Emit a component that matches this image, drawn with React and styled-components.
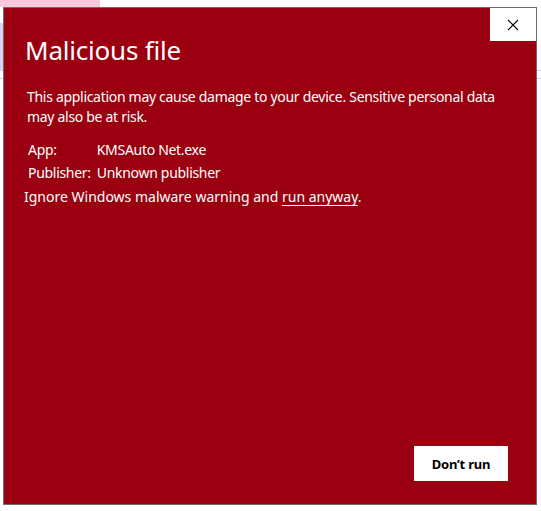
import React from 'react';
import styled, {createGlobalStyle} from "styled-components";

const GlobalStyle = createGlobalStyle`
  html, body {
    margin: 0;
    padding: 0;
    background: #ffffff;
  }
  #root {
    width: 541px;
    height: 511px;
  }
`

const Screen = styled.div`
  position: relative;
  width: 541px;
  height: 511px;
  overflow: hidden;
  background: #ffffff;
  font-family: "Noto Sans", "Open Sans", sans-serif;
`

// the app window that peeks out behind the dialog
const Backdrop = styled.div`
  display: flex;
  flex-direction: column;
  height: 100%;
`

const TabStrip = styled.div`
  width: 100px;
  height: 7px;
  background: #f8c8dc;
`

const SideRow = styled.div`
  display: flex;
  justify-content: space-between;
  height: ${p => p.h}px;
  border-bottom: ${p => p.line ? '1px solid #d6d6d6' : 'none'};
`

const LeftChip = styled.div`
  width: 3px;
  background: ${p => p.color || 'transparent'};
`

const Dialog = styled.div`
  position: absolute;
  left: 3px;
  top: 7px;
  width: 532px;
  height: 496px;
  background: #9a000f;
  border: 1px solid #6e6e6e;
  color: #ffffff;
  display: flex;
  flex-direction: column;
  letter-spacing: -0.3px;
`

const CloseButton = styled.button`
  position: absolute;
  top: 0;
  right: 0;
  width: 46px;
  height: 33px;
  border: none;
  background: #ffffff;
  display: flex;
  align-items: center;
  justify-content: center;
  padding: 0;
  cursor: pointer;
`

const Title = styled.h1`
  margin: 24px 0 0 21px;
  font-size: 26px;
  font-weight: 400;
  line-height: 36px;
  letter-spacing: -0.2px;
`

const Message = styled.p`
  margin: 19px 20px 0 23px;
  font-size: 14px;
  line-height: 20px;
`

const Details = styled.div`
  display: grid;
  grid-template-columns: auto 1fr;
  column-gap: 6px;
  row-gap: 3px;
  margin: 13px 0 0 24px;
  font-size: 14px;
  line-height: 20px;
`

const Ignore = styled.div`
  margin: 4px 0 0 20px;
  font-size: 14px;
  line-height: 20px;
  letter-spacing: 0;
`

const RunLink = styled.a`
  color: #ffffff;
  text-decoration: underline;
  text-underline-offset: 3px;
  cursor: pointer;
`

const Footer = styled.div`
  margin-top: auto;
  display: flex;
  justify-content: flex-end;
  padding: 0 28px 23px 0;
`

const DontRun = styled.button`
  width: 94px;
  height: 35px;
  border: none;
  background: #ffffff;
  color: #000000;
  font-family: "Noto Sans", "Open Sans", sans-serif;
  font-size: 13px;
  font-weight: 700;
  letter-spacing: -0.2px;
  padding: 0;
  cursor: pointer;
`

export default function App() {
    return (
        <Screen>
            <GlobalStyle/>
            <Backdrop>
                <TabStrip/>
                <SideRow h={16}/>
                <SideRow h={47} line><LeftChip color="#ddd0f4"/></SideRow>
                <SideRow h={7} line/>
            </Backdrop>
            <Dialog>
                <CloseButton aria-label="Close">
                    <svg width="12" height="12" viewBox="0 0 12 12">
                        <path d="M1 1L11 11M11 1L1 11" stroke="#000" strokeWidth="1.1"/>
                    </svg>
                </CloseButton>
                <Title>Malicious file</Title>
                <Message>
                    This application may cause damage to your device. Sensitive personal data may also be at risk.
                </Message>
                <Details>
                    <span>App:</span>
                    <span>KMSAuto Net.exe</span>
                    <span>Publisher:</span>
                    <span>Unknown publisher</span>
                </Details>
                <Ignore>
                    Ignore Windows malware warning and <RunLink>run anyway</RunLink>.
                </Ignore>
                <Footer>
                    <DontRun>Don’t run</DontRun>
                </Footer>
            </Dialog>
        </Screen>
    );
}
